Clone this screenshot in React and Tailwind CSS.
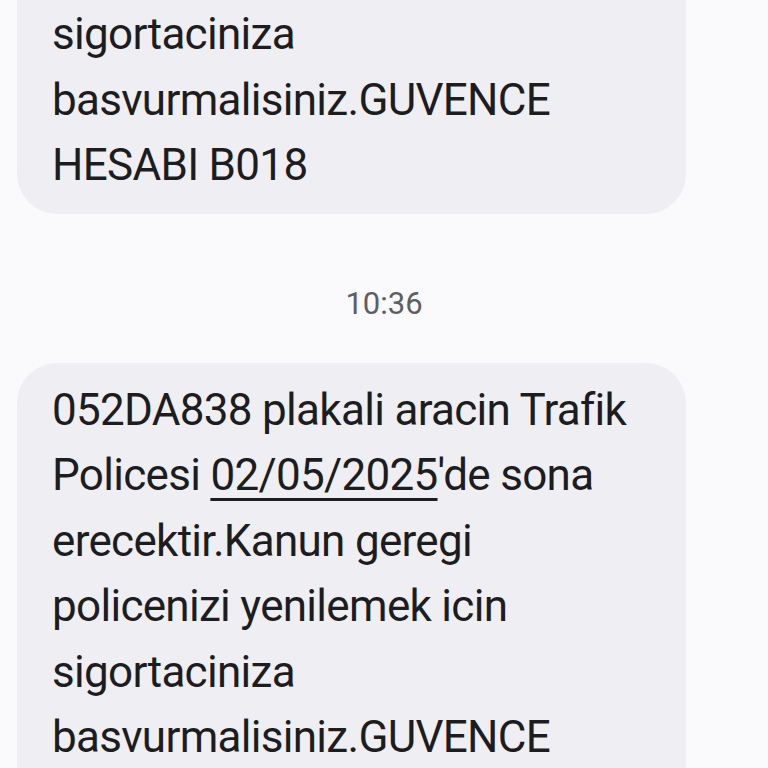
export default function App() {
  const lines = [
    "052DA838 plakali aracin Trafik",
    null,
    "erecektir.Kanun geregi",
    "policenizi yenilemek icin",
    "sigortaciniza",
    "basvurmalisiniz.GUVENCE",
    "HESABI B018",
  ];
  const Msg = () => (
    <div className="whitespace-nowrap">
      {lines.map((l, i) =>
        l === null ? (
          <div key={i}>
            Policesi{" "}
            <span className="underline decoration-[3px] underline-offset-[8px]">02/05/2025</span>
            'de sona
          </div>
        ) : (
          <div key={i}>{l}</div>
        )
      )}
    </div>
  );
  return (
    <div
      className="w-[768px] h-[768px] overflow-hidden bg-[#fafafc] text-[#1d1d1f] flex flex-col"
      style={{ fontFamily: "Roboto, 'Noto Sans', sans-serif" }}
    >
      <div className="ml-[17px] w-[669px] mt-[-275px] bg-[#efeff3] rounded-[40px] pl-[35px] pt-[15px] pb-[15px] text-[44px] leading-[65.5px] tracking-[-0.7px] shrink-0">
        <Msg />
      </div>
      <div className="h-[149px] pt-[70px] text-center text-[31px] leading-[40px] text-[#5e5e62] shrink-0">
        10:36
      </div>
      <div className="ml-[17px] w-[669px] bg-[#efeff3] rounded-[40px] pl-[35px] pt-[15px] pb-[15px] text-[44px] leading-[65.5px] tracking-[-0.7px] shrink-0">
        <Msg />
      </div>
    </div>
  );
}
